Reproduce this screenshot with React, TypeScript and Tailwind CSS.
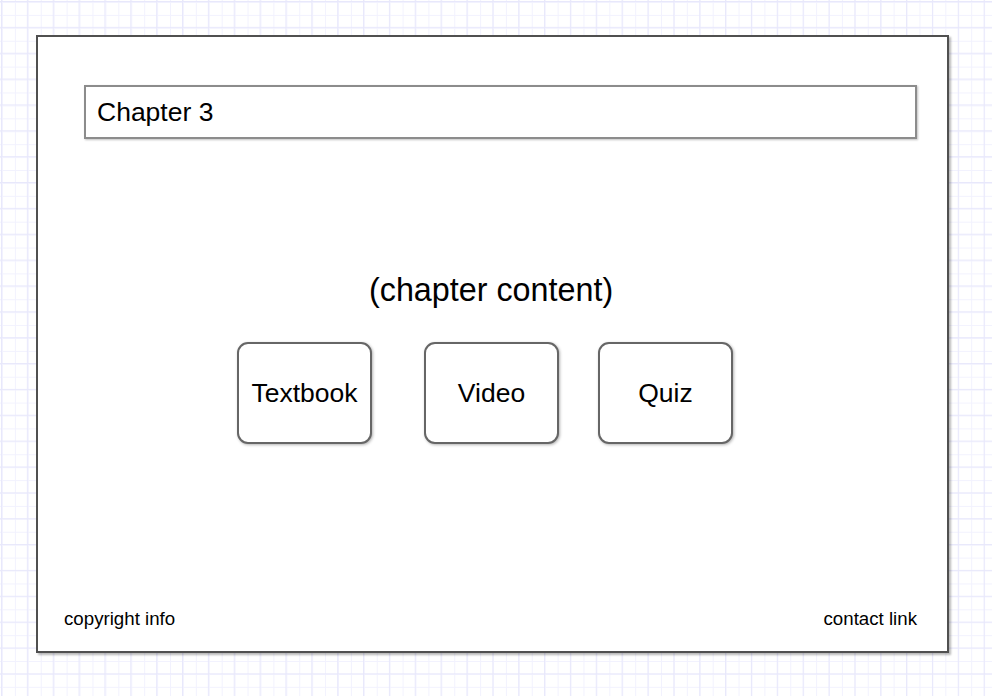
import React from "react"

const sections = [
  { label: "Textbook", gap: "ml-0" },
  { label: "Video", gap: "ml-[52px]" },
  { label: "Quiz", gap: "ml-[39px]" },
]

export default function App() {
  return (
    <div className="w-[992px] h-[696px] overflow-hidden pt-[35px] pl-[36px] bg-white bg-[linear-gradient(to_right,#e8e8fb_1px,transparent_1px),linear-gradient(to_bottom,#e8e8fb_1px,transparent_1px),linear-gradient(to_right,#f2f2fe_1px,transparent_1px),linear-gradient(to_bottom,#f2f2fe_1px,transparent_1px)] bg-[size:25.86px_25.86px,25.86px_25.86px,12.93px_12.93px,12.93px_12.93px] bg-[position:1px_1px,1px_1px,2px_2px,2px_2px] font-['Liberation_Sans',Arial,sans-serif] text-black">
      {/* Page frame */}
      <div className="w-[913px] h-[618px] border-2 border-[#505050] bg-white shadow-[2px_2px_2px_rgba(0,0,0,0.28)] flex flex-col">
        {/* Title field */}
        <div className="mt-[48px] ml-[46px] w-[833px] h-[54px] border-2 border-[#8c8c8c] shadow-[1px_1px_2px_rgba(0,0,0,0.25)] flex items-center pl-[11px] text-[26.5px] leading-none">
          Chapter 3
        </div>

        <div className="mt-[133px] ml-[331px] text-[32.3px] leading-[37px]">(chapter content)</div>

        {/* Section buttons */}
        <div className="mt-[33px] ml-[199px] flex">
          {sections.map((s) => (
            <div
              key={s.label}
              className={`${s.gap} w-[135px] h-[102px] rounded-[11px] border-2 border-[#666] bg-white shadow-[1px_1px_3px_rgba(0,0,0,0.3)] flex items-center justify-center text-[26.5px] leading-none`}
            >
              {s.label}
            </div>
          ))}
        </div>

        {/* Footer */}
        <div className="mt-auto mb-[22px] pl-[26px] pr-[30px] flex justify-between text-[18.7px] leading-[21px]">
          <span>copyright info</span>
          <span>contact link</span>
        </div>
      </div>
    </div>
  )
}
